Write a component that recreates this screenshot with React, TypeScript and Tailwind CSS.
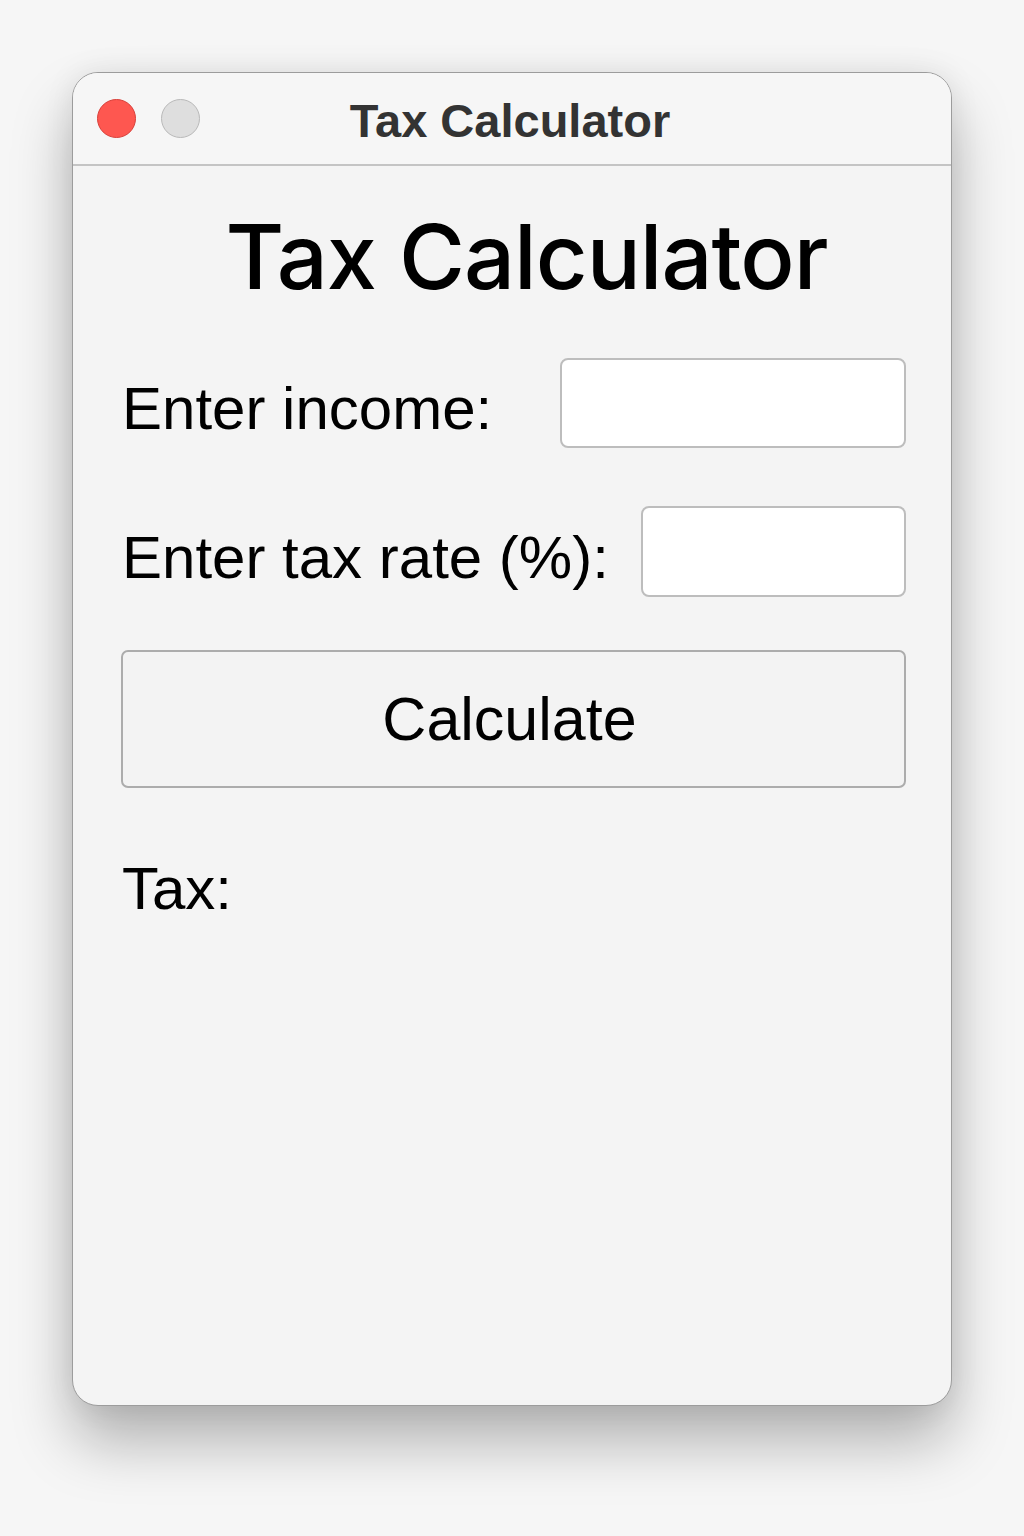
export default function App() {
  const font = { fontFamily: '"Liberation Sans", Arial, sans-serif' };
  return (
    <div className="w-[1024px] h-[1536px] bg-[#f6f6f6] pt-[72px] pl-[72px]" style={font}>
      <div className="w-[880px] h-[1334px] rounded-[26px] border border-[#9c9c9c] bg-[#f4f4f4] shadow-[0_36px_60px_rgba(0,0,0,0.28),0_0_30px_rgba(0,0,0,0.08)] overflow-hidden flex flex-col">
        <div className="relative h-[93px] shrink-0 bg-[#f6f6f6] border-b-2 border-[#c4c4c4] flex items-center pl-[24px] gap-[25px]">
          <div className="w-[39px] h-[39px] rounded-full bg-[#fe5750] border border-[#d8403a]" />
          <div className="w-[39px] h-[39px] rounded-full bg-[#dedede] border border-[#b9b9b9]" />
          <div className="absolute inset-0 flex items-center justify-center pointer-events-none">
            <span className="text-[47px] font-bold text-[#333333] leading-none mt-[4px] ml-[-4px]">Tax Calculator</span>
          </div>
        </div>
        <div className="flex-1 flex flex-col pl-[48px] pr-[45px]">
          <h1
            className="mt-[46px] pl-[26px] text-[90px] leading-none text-black text-center font-medium tracking-[-1px]"
            style={{ fontFamily: 'Inter, "Liberation Sans", sans-serif' }}
          >
            Tax Calculator
          </h1>
          <div className="mt-[56px] flex items-start justify-between">
            <span className="mt-[21px] ml-[1px] text-[60px] leading-none text-black">Enter income:</span>
            <div className="w-[346px] h-[90px] rounded-[8px] border-2 border-[#bdbdbd] bg-white" />
          </div>
          <div className="mt-[58px] flex items-start justify-between">
            <span className="mt-[22px] ml-[1px] text-[60px] leading-none text-black">Enter tax rate (%):</span>
            <div className="w-[265px] h-[91px] rounded-[8px] border-2 border-[#bdbdbd] bg-white" />
          </div>
          <button className="mt-[53px] h-[138px] w-full rounded-[7px] border-2 border-[#acacac] bg-[#f3f3f3] text-[61px] leading-none text-black pr-[8px]">
            Calculate
          </button>
          <div className="mt-[71px] ml-[1px] text-[60px] leading-none text-black">Tax:</div>
        </div>
      </div>
    </div>
  );
}
